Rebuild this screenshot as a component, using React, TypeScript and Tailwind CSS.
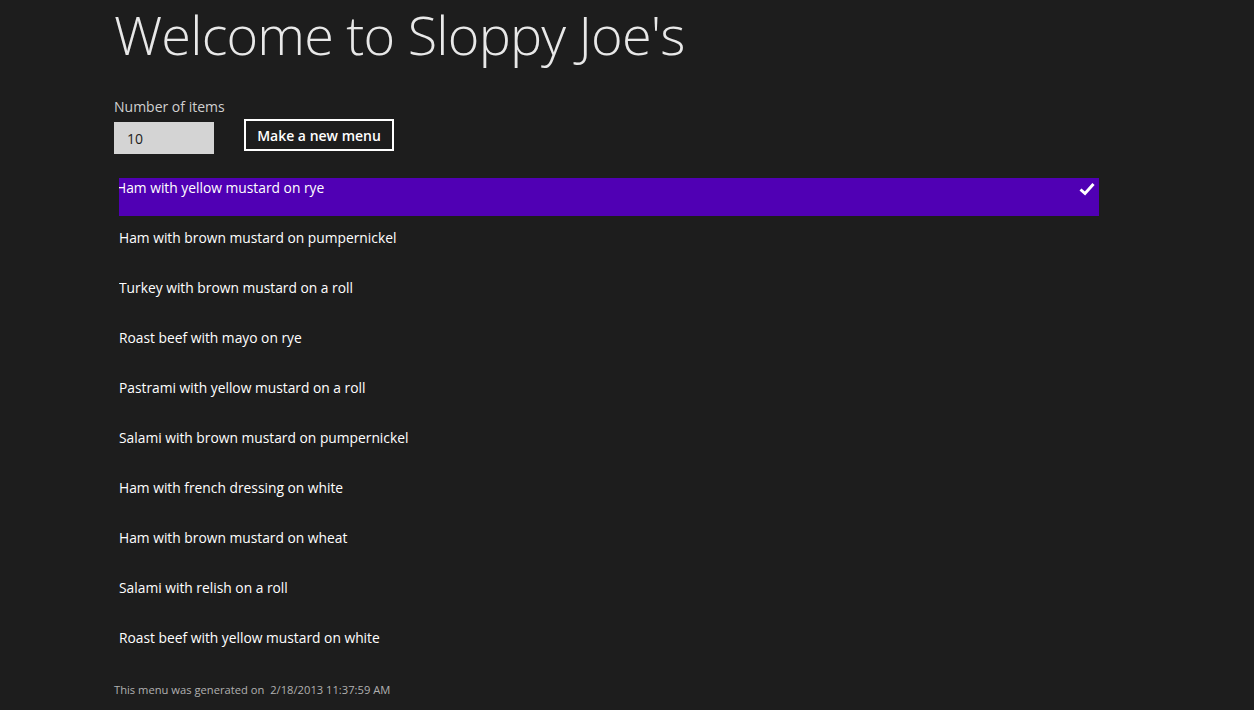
import { useState } from "react";

const items = [
  "Ham with yellow mustard on rye",
  "Ham with brown mustard on pumpernickel",
  "Turkey with brown mustard on a roll",
  "Roast beef with mayo on rye",
  "Pastrami with yellow mustard on a roll",
  "Salami with brown mustard on pumpernickel",
  "Ham with french dressing on white",
  "Ham with brown mustard on wheat",
  "Salami with relish on a roll",
  "Roast beef with yellow mustard on white",
];

function Check() {
  return (
    <svg width="16" height="14" viewBox="0 0 16 14" className="shrink-0">
      <path d="M1.5 7.5 L6 11.5 L14.5 2" fill="none" stroke="#ffffff" strokeWidth="3" />
    </svg>
  );
}

export default function App() {
  const [selected, setSelected] = useState(0);
  const [count, setCount] = useState("10");

  return (
    <div
      className="min-h-[710px] w-full bg-[#1d1d1d] pl-[114px] text-white"
      style={{ fontFamily: '"Open Sans", "Liberation Sans", sans-serif' }}
    >
      <h1 className="pt-[1px] text-[54px] font-light leading-[66px] tracking-[-0.8px] text-[#e8e8e8]">
        Welcome to Sloppy Joe's
      </h1>

      <div className="mt-[31px] flex items-end">
        <div className="flex w-[130px] flex-col">
          <label className="text-[14px] leading-[18px] text-[#d0d0d0]">Number of items</label>
          <input
            value={count}
            onChange={(e) => setCount(e.target.value)}
            className="mt-[6px] h-[32px] w-[100px] bg-[#d4d4d4] px-[13px] text-[14px] text-[#1d1d1d] outline-none"
          />
        </div>
        <button className="mb-[3px] h-[32px] w-[150px] border-2 border-white text-[14px] font-semibold text-white">
          Make a new menu
        </button>
      </div>

      <ul className="mt-[24px] flex w-[985px] flex-col gap-[12px] pl-[5px]">
        {items.map((item, i) => (
          <li
            key={item}
            onClick={() => setSelected(i)}
            className={
              "flex h-[38px] items-start justify-between overflow-hidden text-[13.8px] leading-[20px] " +
              (i === selected ? "bg-[#5000b4]" : "")
            }
          >
            <span className={i === selected ? "ml-[-3px]" : ""}>{item}</span>
            {i === selected && (
              <span className="mr-[4px] mt-[4px]">
                <Check />
              </span>
            )}
          </li>
        ))}
      </ul>

      <p className="mt-[16px] text-[11.2px] text-[#b0b0b0]">
        This menu was generated on&nbsp; 2/18/2013 11:37:59 AM
      </p>
    </div>
  );
}
